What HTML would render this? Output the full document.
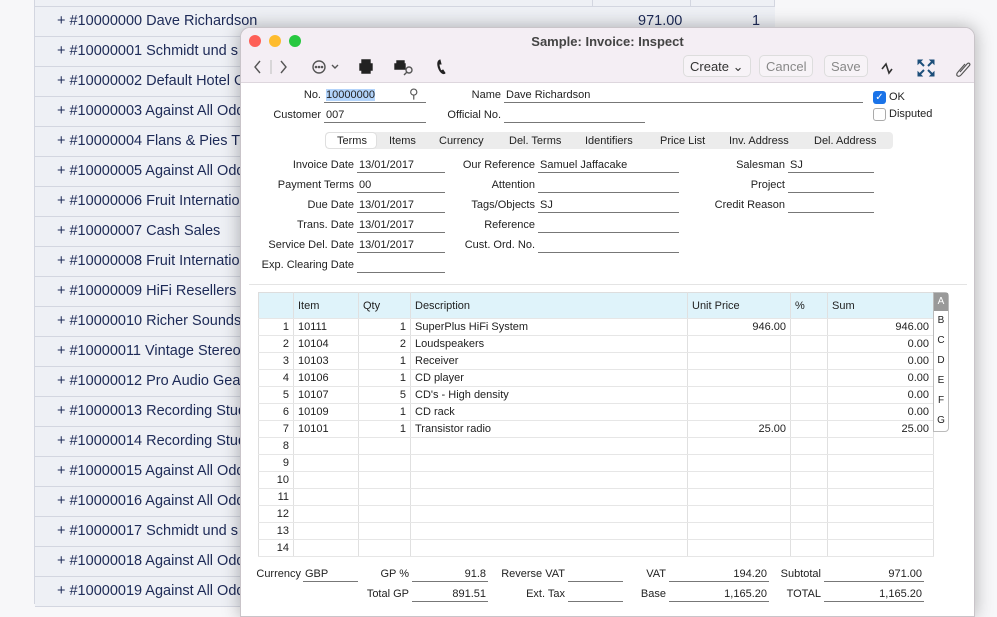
<!DOCTYPE html>
<html><head><meta charset="utf-8"><style>
*{margin:0;padding:0;box-sizing:border-box}
body{width:997px;height:604px;overflow:hidden;background:#f7f7f9;font-family:"Liberation Sans",sans-serif;position:relative}
.a{position:absolute;white-space:nowrap}
.row{position:absolute;left:35px;width:740px;height:30px;border-bottom:1px solid #d3d6e0;background:#eef0f5;color:#1d2a57;font-size:14.5px}
.row span{position:absolute;left:22px;top:6px}
.win{position:absolute;left:240px;top:27px;width:735px;height:590px;background:#fff;border-radius:10px 10px 0 0;box-shadow:0 0 18px rgba(0,0,0,.3);overflow:hidden;border:1px solid #c9c4c9}
.tb{position:absolute;left:0;top:0;width:100%;height:55px;background:#f4eef4;border-bottom:1px solid #ddd6dd}
.l{position:absolute;font-size:11px;color:#222;white-space:nowrap}
.r{text-align:right}
.f{position:absolute;border-bottom:1px solid #777;font-size:11px;height:14px;color:#222;white-space:nowrap;padding-left:2px}
.btn{position:absolute;top:27px;height:22px;border:1px solid #ddd;border-radius:5px;background:#f7f3f7;font-size:13px;color:#888;padding:3px 6px}
table{border-collapse:collapse;font-size:11px;color:#222}
td{height:17px;border-bottom:1px solid #e6e6e6;border-right:1px solid #e0e0e0;padding:0 4px;white-space:nowrap}
</style></head><body>
<div class="a" style="left:35px;top:0;width:740px;height:7px;background:#eef0f5;border-bottom:1px solid #d3d6e0"></div>
<div class="a" style="left:592px;top:0;width:1px;height:30px;background:#d3d6e0"></div>
<div class="a" style="left:690px;top:0;width:1px;height:30px;background:#d3d6e0"></div>
<div class="a" style="left:774px;top:0;width:1px;height:604px;background:#d3d6e0"></div>
<div class="a" style="left:34px;top:0;width:1px;height:604px;background:#d3d6e0"></div>
<div class="row" style="top:7px"><span>+ #10000000 Dave Richardson</span><span style="left:603px">971.00</span><span style="left:717px">1</span></div>
<div class="row" style="top:37px"><span>+ #10000001 Schmidt und s</span></div>
<div class="row" style="top:67px"><span>+ #10000002 Default Hotel G</span></div>
<div class="row" style="top:97px"><span>+ #10000003 Against All Odd</span></div>
<div class="row" style="top:127px"><span>+ #10000004 Flans &amp; Pies Tr</span></div>
<div class="row" style="top:157px"><span>+ #10000005 Against All Odd</span></div>
<div class="row" style="top:187px"><span>+ #10000006 Fruit Internatio</span></div>
<div class="row" style="top:217px"><span>+ #10000007 Cash Sales</span></div>
<div class="row" style="top:247px"><span>+ #10000008 Fruit Internatio</span></div>
<div class="row" style="top:277px"><span>+ #10000009 HiFi Resellers L</span></div>
<div class="row" style="top:307px"><span>+ #10000010 Richer Sounds</span></div>
<div class="row" style="top:337px"><span>+ #10000011 Vintage Stereo</span></div>
<div class="row" style="top:367px"><span>+ #10000012 Pro Audio Gea</span></div>
<div class="row" style="top:397px"><span>+ #10000013 Recording Stud</span></div>
<div class="row" style="top:427px"><span>+ #10000014 Recording Stud</span></div>
<div class="row" style="top:457px"><span>+ #10000015 Against All Odd</span></div>
<div class="row" style="top:487px"><span>+ #10000016 Against All Odd</span></div>
<div class="row" style="top:517px"><span>+ #10000017 Schmidt und s</span></div>
<div class="row" style="top:547px"><span>+ #10000018 Against All Odd</span></div>
<div class="row" style="top:577px"><span>+ #10000019 Against All Odd</span></div>

<div class="win">
<div class="tb">
<div class="a" style="left:8px;top:7px;width:12px;height:12px;border-radius:6px;background:#fe5f57"></div>
<div class="a" style="left:28px;top:7px;width:12px;height:12px;border-radius:6px;background:#febc2e"></div>
<div class="a" style="left:48px;top:7px;width:12px;height:12px;border-radius:6px;background:#28c840"></div>
<div class="a" style="left:0;width:100%;top:6px;text-align:center;font-size:13px;font-weight:bold;color:#444">Sample: Invoice: Inspect</div>
<svg class="a" style="left:0;top:28px" width="220" height="22" fill="none" stroke="#555" stroke-width="1.4">
<path d="M19 5l-5 6 5 6"/><path d="M40 5l5 6-5 6"/><line x1="30" y1="4" x2="30" y2="18" stroke="#ccc"/>
<circle cx="78" cy="11" r="6"/><circle cx="75" cy="11" r=".6" fill="#555"/><circle cx="78" cy="11" r=".6" fill="#555"/><circle cx="81" cy="11" r=".6" fill="#555"/>
<path d="M91 9l3 3 3-3"/>
<path d="M121 8v-4h8v4M119 8h12v6h-12zM121 14v3h8v-3" fill="#222" stroke="#222"/>
<path d="M156 8v-3h7v3M154 8h10v5h-10z" fill="#222" stroke="#222"/><circle cx="168" cy="14" r="3"/><path d="M166 16l-3 3"/>
<path d="M199 4c-3 1-3 6 0 11 2 3 4 3 5 2l-2-3-2 1c-1-2-2-5-2-7l2 0-1-4z" fill="#222" stroke="#222" stroke-width="1"/>
</svg>
<div class="btn" style="left:442px;color:#333">Create ⌄</div>
<div class="btn" style="left:518px">Cancel</div>
<div class="btn" style="left:583px">Save</div>
<svg class="a" style="left:635px;top:30px" width="100" height="20" fill="none" stroke="#333" stroke-width="1.6">
<path d="M6 11l4-5 3 9 3-4"/>
<g stroke="#1d4f7a" stroke-width="2"><path d="M44 4l4 4M56 4l-4 4M44 16l4-4M56 16l-4-4"/>
<path d="M42 2h4l-4 4zM58 2h-4l4 4zM42 18h4l-4-4zM58 18h-4l4-4z" fill="#1d4f7a" stroke-width="1"/></g>
<path d="M84 14l7-8c2-2 4 0 2 2l-8 9c-3 3-6 0-3-3l7-8" stroke="#555" stroke-width="1.2"/>
</svg>
</div>

<div class="l r" style="left:40px;top:61px;width:40px">No.</div>
<div class="f" style="left:83px;top:61px;width:102px"><span style="background:#b3d4fb">10000000</span></div>
<div class="l" style="left:168px;top:58px;font-size:13px;color:#555">&#9906;</div>
<div class="l r" style="left:200px;top:61px;width:60px">Name</div>
<div class="f" style="left:263px;top:61px;width:359px">Dave Richardson</div>
<div class="l r" style="left:0;top:81px;width:80px">Customer</div>
<div class="f" style="left:83px;top:81px;width:102px">007</div>
<div class="l r" style="left:180px;top:81px;width:80px">Official No.</div>
<div class="f" style="left:263px;top:81px;width:141px"></div>
<div class="a" style="left:632px;top:63px;width:13px;height:13px;border-radius:3px;background:#1a73e8;color:#fff;font-size:10px;text-align:center;line-height:13px">✓</div>
<div class="l" style="left:648px;top:63px">OK</div>
<div class="a" style="left:632px;top:80px;width:13px;height:13px;border-radius:3px;border:1px solid #aaa"></div>
<div class="l" style="left:648px;top:80px">Disputed</div>

<div class="a" style="left:84px;top:104px;width:568px;height:17px;background:#ececec;border-radius:4px;font-size:11px;color:#333"></div>
<div class="a" style="left:85px;top:105px;width:50px;height:15px;background:#fff;border-radius:3px;box-shadow:0 0 1px #999"></div>
<div class="l" style="left:96px;top:107px">Terms</div>
<div class="l" style="left:148px;top:107px">Items</div>
<div class="l" style="left:198px;top:107px">Currency</div>
<div class="l" style="left:268px;top:107px">Del. Terms</div>
<div class="l" style="left:344px;top:107px">Identifiers</div>
<div class="l" style="left:419px;top:107px">Price List</div>
<div class="l" style="left:488px;top:107px">Inv. Address</div>
<div class="l" style="left:573px;top:107px">Del. Address</div>

<div class="l r" style="left:0;top:131px;width:113px">Invoice Date</div><div class="f" style="left:116px;top:131px;width:88px">13/01/2017</div>
<div class="l r" style="left:0;top:151px;width:113px">Payment Terms</div><div class="f" style="left:116px;top:151px;width:88px">00</div>
<div class="l r" style="left:0;top:171px;width:113px">Due Date</div><div class="f" style="left:116px;top:171px;width:88px">13/01/2017</div>
<div class="l r" style="left:0;top:191px;width:113px">Trans. Date</div><div class="f" style="left:116px;top:191px;width:88px">13/01/2017</div>
<div class="l r" style="left:0;top:211px;width:113px">Service Del. Date</div><div class="f" style="left:116px;top:211px;width:88px">13/01/2017</div>
<div class="l r" style="left:0;top:231px;width:113px">Exp. Clearing Date</div><div class="f" style="left:116px;top:231px;width:88px"></div>
<div class="l r" style="left:190px;top:131px;width:104px">Our Reference</div><div class="f" style="left:297px;top:131px;width:141px">Samuel Jaffacake</div>
<div class="l r" style="left:190px;top:151px;width:104px">Attention</div><div class="f" style="left:297px;top:151px;width:141px"></div>
<div class="l r" style="left:190px;top:171px;width:104px">Tags/Objects</div><div class="f" style="left:297px;top:171px;width:141px">SJ</div>
<div class="l r" style="left:190px;top:191px;width:104px">Reference</div><div class="f" style="left:297px;top:191px;width:141px"></div>
<div class="l r" style="left:190px;top:211px;width:104px">Cust. Ord. No.</div><div class="f" style="left:297px;top:211px;width:141px"></div>
<div class="l r" style="left:430px;top:131px;width:114px">Salesman</div><div class="f" style="left:547px;top:131px;width:86px">SJ</div>
<div class="l r" style="left:430px;top:151px;width:114px">Project</div><div class="f" style="left:547px;top:151px;width:86px"></div>
<div class="l r" style="left:430px;top:171px;width:114px">Credit Reason</div><div class="f" style="left:547px;top:171px;width:86px"></div>
<div class="a" style="left:8px;top:256px;width:718px;height:1px;background:#e4e4e4"></div>

<table class="a" style="left:17px;top:264px;width:676px;border:1px solid #ddd">
<tr style="background:#dff3fa;height:26px"><td style="width:35px;height:26px"></td><td style="width:65px">Item</td><td style="width:52px">Qty</td><td style="width:277px">Description</td><td style="width:103px">Unit Price</td><td style="width:37px">%</td><td>Sum</td></tr>
<tr><td class="r">1</td><td>10111</td><td class="r">1</td><td>SuperPlus HiFi System</td><td class="r">946.00</td><td></td><td class="r">946.00</td></tr>
<tr><td class="r">2</td><td>10104</td><td class="r">2</td><td>Loudspeakers</td><td></td><td></td><td class="r">0.00</td></tr>
<tr><td class="r">3</td><td>10103</td><td class="r">1</td><td>Receiver</td><td></td><td></td><td class="r">0.00</td></tr>
<tr><td class="r">4</td><td>10106</td><td class="r">1</td><td>CD player</td><td></td><td></td><td class="r">0.00</td></tr>
<tr><td class="r">5</td><td>10107</td><td class="r">5</td><td>CD's - High density</td><td></td><td></td><td class="r">0.00</td></tr>
<tr><td class="r">6</td><td>10109</td><td class="r">1</td><td>CD rack</td><td></td><td></td><td class="r">0.00</td></tr>
<tr><td class="r">7</td><td>10101</td><td class="r">1</td><td>Transistor radio</td><td class="r">25.00</td><td></td><td class="r">25.00</td></tr>
<tr><td class="r">8</td><td></td><td></td><td></td><td></td><td></td><td></td></tr>
<tr><td class="r">9</td><td></td><td></td><td></td><td></td><td></td><td></td></tr>
<tr><td class="r">10</td><td></td><td></td><td></td><td></td><td></td><td></td></tr>
<tr><td class="r">11</td><td></td><td></td><td></td><td></td><td></td><td></td></tr>
<tr><td class="r">12</td><td></td><td></td><td></td><td></td><td></td><td></td></tr>
<tr><td class="r">13</td><td></td><td></td><td></td><td></td><td></td><td></td></tr>
<tr><td class="r">14</td><td></td><td></td><td></td><td></td><td></td><td></td></tr>
</table>
<div class="a" style="left:692px;top:264px;width:16px;height:140px;border:1px solid #bbb;border-radius:0 4px 4px 0;background:#fff;font-size:10px;color:#222">
<div style="height:18px;background:#999;color:#fff;text-align:center;line-height:18px">A</div>
<div style="height:20px;text-align:center;line-height:20px">B</div>
<div style="height:20px;text-align:center;line-height:20px">C</div>
<div style="height:20px;text-align:center;line-height:20px">D</div>
<div style="height:20px;text-align:center;line-height:20px">E</div>
<div style="height:20px;text-align:center;line-height:20px">F</div>
<div style="height:20px;text-align:center;line-height:20px">G</div>
</div>

<div class="l r" style="left:0;top:540px;width:60px">Currency</div><div class="f" style="left:62px;top:540px;width:55px">GBP</div>
<div class="l r" style="left:100px;top:540px;width:68px">GP %</div><div class="f r" style="left:171px;top:540px;width:76px;padding-right:2px">91.8</div>
<div class="l r" style="left:170px;top:540px;width:154px">Reverse VAT</div><div class="f" style="left:327px;top:540px;width:55px"></div>
<div class="l r" style="left:380px;top:540px;width:45px">VAT</div><div class="f r" style="left:428px;top:540px;width:100px;padding-right:2px">194.20</div>
<div class="l r" style="left:520px;top:540px;width:60px">Subtotal</div><div class="f r" style="left:583px;top:540px;width:100px;padding-right:2px">971.00</div>
<div class="l r" style="left:100px;top:560px;width:68px">Total GP</div><div class="f r" style="left:171px;top:560px;width:76px;padding-right:2px">891.51</div>
<div class="l r" style="left:170px;top:560px;width:154px">Ext. Tax</div><div class="f" style="left:327px;top:560px;width:55px"></div>
<div class="l r" style="left:380px;top:560px;width:45px">Base</div><div class="f r" style="left:428px;top:560px;width:100px;padding-right:2px">1,165.20</div>
<div class="l r" style="left:520px;top:560px;width:60px">TOTAL</div><div class="f r" style="left:583px;top:560px;width:100px;padding-right:2px">1,165.20</div>
</div>
</body></html>
